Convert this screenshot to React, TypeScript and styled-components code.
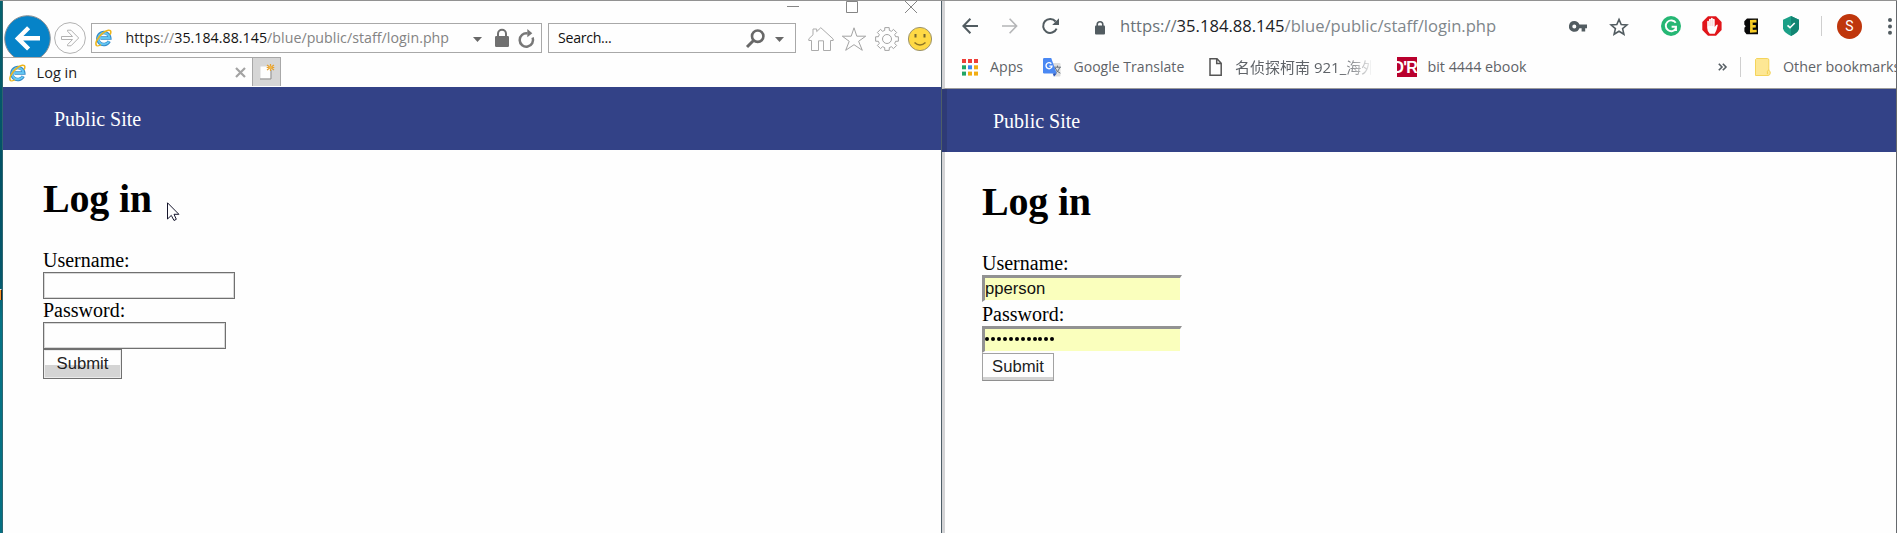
import React from "react";
import styled, { createGlobalStyle, css } from "styled-components";

const GlobalStyle = createGlobalStyle`
  *, *::before, *::after { box-sizing: border-box; }
  body { margin: 0; background: #fefefe; overflow: hidden; }
  svg { display: block; flex: none; overflow: visible; }
`;

const uiFont = `"Open Sans", "Noto Sans CJK SC", sans-serif`;
const serifFont = `"Liberation Serif", serif`;
const controlFont = `"Liberation Sans", sans-serif`;

const Desktop = styled.div`
  display: flex;
  width: 1897px;
  height: 533px;
  border-top: 1px solid #929292;
  background: #fefefe;
  overflow: hidden;
`;

const DesktopEdge = styled.div`
  flex: none;
  width: 3px;
  padding-top: 288px;
  background: linear-gradient(90deg, transparent 2px, #2d6570 2px),
    linear-gradient(#05636f, #035266 30%, #04586c 52%, #067486 60%, #047083);
`;

const EdgeMark = styled.div`
  width: 2px;
  height: 11px;
  background: #f79226;
  border-right: 1px solid #222;
  border-top: 1px solid #eee;
`;

const LeftWindow = styled.section`
  position: relative;
  flex: none;
  width: 939px;
  border-right: 1px solid #4e5e68;
`;

const RightWindow = styled.section`
  flex: none;
  width: 955px;
  border-right: 1px solid #66696d;
  display: flex;
  flex-direction: column;
  overflow: hidden;
`;

const WindowControls = styled.div`
  display: flex;
  justify-content: flex-end;
  gap: 47px;
  height: 12px;
  padding-right: 24px;
`;

const IeToolbar = styled.div`
  display: flex;
  align-items: flex-start;
  height: 44px;
  overflow: hidden;
`;

const Slot = styled.div<{ $gap?: number; $top?: number }>`
  flex: none;
  margin-left: ${(p) => p.$gap ?? 0}px;
  margin-top: ${(p) => p.$top ?? 0}px;
`;

const Field = styled.div<{ $width: number; $gap: number }>`
  display: flex;
  align-items: center;
  flex: none;
  width: ${(p) => p.$width}px;
  height: 30px;
  margin: 10px 0 0 ${(p) => p.$gap}px;
  border: 1px solid #a8a8a8;
`;

const Label = styled.span<{ $width: number; $gap: number; $size?: number; $spacing?: number; $color?: string; $fade?: boolean }>`
  flex: none;
  width: ${(p) => p.$width}px;
  margin-left: ${(p) => p.$gap}px;
  font: ${(p) => p.$size ?? 14.2}px/20px ${uiFont};
  letter-spacing: ${(p) => p.$spacing ?? 0}px;
  color: ${(p) => p.$color ?? "#5f6368"};
  white-space: nowrap;
  ${(p) =>
    p.$fade &&
    css`
      overflow: hidden;
      mask-image: linear-gradient(90deg, #000 108px, transparent 140px);
    `}
`;

const Part = styled.span<{ $color: string }>`
  color: ${(p) => p.$color};
`;

const TabRow = styled.div`
  display: flex;
  height: 30px;
`;

const Tab = styled.div`
  display: flex;
  align-items: center;
  width: 249px;
  height: 30px;
  border-top: 1px solid #a8a8a8;
`;

const NewTab = styled.div`
  width: 29px;
  height: 29px;
  background: #d6d6d6;
  border: 1px solid #a8a8a8;
  border-bottom: 0;
  padding: 7px 0 0 6px;
`;

const SiteNav = styled.nav<{ $right?: boolean }>`
  flex: none;
  height: 63px;
  padding-left: ${(p) => (p.$right ? 46 : 51)}px;
  border-left: ${(p) => (p.$right ? "5px solid #2e3a76" : "0")};
  background: #334287;
  color: #fff;
  font: 20px/65px ${serifFont};
`;

const LoginPage = styled.main<{ $right?: boolean }>`
  flex: 1;
  display: flex;
  flex-direction: column;
  align-items: flex-start;
  padding-left: ${(p) => (p.$right ? 37 : 40)}px;
  border-left: ${(p) => (p.$right ? "3px solid #d3d3d5" : "0")};
  color: #000;
  font: 20px/23px ${serifFont};
`;

const Heading = styled.h1<{ $right?: boolean }>`
  margin: ${(p) => (p.$right ? "27px 0 26px" : "26px 0 27px")};
  font: bold 40px/46px ${serifFont};
  letter-spacing: -0.2px;
`;

const FieldLabel = styled.label<{ $right?: boolean }>`
  height: ${(p) => (p.$right ? 24 : 23)}px;
  line-height: ${(p) => (p.$right ? 25 : 23)}px;
`;

const PlainInput = styled.input<{ $width: number }>`
  width: ${(p) => p.$width}px;
  height: 27px;
  margin: 0;
  padding: 0 3px;
  border: 1px solid #707070;
  border-radius: 0;
  background: #fefefe;
  box-shadow: inset 0 0 0 1px #d8d8d8;
  outline: 0;
  font: 16.67px ${controlFont};
`;

const FilledInput = styled.div`
  width: 200px;
  height: 27px;
  border-style: solid;
  border-width: 3px 2px 2px 3px;
  border-color: #929292 #fefefe #fefefe #929292;
  background: #faffbd;
  background-clip: padding-box;
  color: #111;
  font: 16.67px/21px ${controlFont};
`;

const PasswordDots = styled.div`
  display: flex;
  align-items: center;
  gap: 1.9px;
  height: 19px;
  padding-left: 0.4px;
`;

const Dot = styled.i`
  width: 4px;
  height: 4px;
  border-radius: 50%;
  background: #000;
`;

const SubmitButton = styled.button<{ $right?: boolean }>`
  width: ${(p) => (p.$right ? 72 : 79)}px;
  height: ${(p) => (p.$right ? 28 : 30)}px;
  margin: 0;
  padding: 0 0 ${(p) => (p.$right ? 1 : 0)}px;
  border: 1px solid ${(p) => (p.$right ? "#a2a2a2" : "#707070")};
  border-bottom-color: ${(p) => (p.$right ? "#8f8f8f" : "#707070")};
  border-radius: 0;
  color: #222;
  font: 16.67px/20px ${controlFont};
  background: ${(p) =>
    p.$right ? "linear-gradient(#fefefe 23px, #d3d3d3 23px)" : "linear-gradient(#fefefe 15px, #d4d4d4 15px)"};
  box-shadow: ${(p) => (p.$right ? "none" : "inset 0 0 0 1px #ececec")};
`;

const Pointer = styled.svg`
  position: absolute;
  left: 164px;
  top: 201px;
`;

const ChromeTop = styled.header`
  flex: none;
  height: 88px;
  border-left: 3px solid #d3d3d5;
  border-bottom: 1px solid #9c9c9c;
`;

const ChromeRow = styled.div`
  display: flex;
  align-items: center;
  height: 50px;
  overflow: hidden;
`;

const BookmarkRow = styled(ChromeRow)`
  height: 32px;
`;

const Divider = styled.div<{ $gap: number }>`
  flex: none;
  width: 1px;
  height: 20px;
  margin-left: ${(p) => p.$gap}px;
  background: #cfcfcf;
`;

const Avatar = styled.div`
  flex: none;
  width: 25px;
  height: 25px;
  margin-left: 15px;
  border-radius: 50%;
  background: #bf360c;
  color: #fff;
  text-align: center;
  font: 14px/25px Roboto, sans-serif;
`;

const ReaderBadge = styled.div`
  flex: none;
  display: flex;
  justify-content: flex-end;
  width: 20px;
  height: 20px;
  margin-left: 26px;
  overflow: hidden;
  background: #b9002d;
  color: #fff;
  font: bold 16px/21px ${controlFont};
  letter-spacing: -0.8px;
`;

const IeLogo = () => (
  <svg width="17" height="18" viewBox="0 0 17 18" fill="none">
    <path d="M14.2 12.2A6 6 0 1 1 14.8 9H5.4" stroke="#3289c7" strokeWidth="3.4" />
    <path d="M13.8 12.4A5.7 5.7 0 1 1 14.5 9H5.4" stroke="#62c5f2" strokeWidth="2" />
    <path d="M2.2 16.8C-1.2 15.4 2.5 8.4 7.4 4.3C11.5 1 16.3-.1 15.8 3.5C15.7 4.3 15.4 5 15 5.7" stroke="#edb51c" strokeWidth="1.6" />
    <path d="M2.2 16.8c1.2.3 2.6-.2 4-1" stroke="#edb51c" strokeWidth="1.2" />
  </svg>
);

const Caret = () => (
  <svg width="9" height="5" viewBox="0 0 9 5"><path d="M0 0h9L4.5 5Z" fill="#686868" /></svg>
);

const spokes = [0, 45, 90, 135, 180, 225, 270, 315];
const gearPath = spokes
  .map((a, i) => {
    const at = (r: number, d: number) => {
      const t = ((a + d - 90) * Math.PI) / 180;
      return `${(12 + r * Math.cos(t)).toFixed(2)} ${(12 + r * Math.sin(t)).toFixed(2)}`;
    };
    return `${i ? "L" : "M"}${at(8.9, -15)}L${at(11.6, -11)}L${at(11.6, 11)}L${at(8.9, 15)}`;
  })
  .join("") + "Z";

function Url({ dim, scheme, host, colon }: { dim: string; scheme: string; host: string; colon: string }) {
  return (
    <>
      <Part $color={scheme}>https</Part>
      <Part $color={colon}>://</Part>
      <Part $color={host}>35.184.88.145</Part>
      <Part $color={dim}>/blue/public/staff/login.php</Part>
    </>
  );
}

function ExplorerWindow() {
  return (
    <LeftWindow>
      <WindowControls>
        <svg width="12" height="12"><path d="M0 5.5h12" stroke="#858585" /></svg>
        <svg width="12" height="12"><path d="M.5 .5h11v11H.5Z" fill="none" stroke="#858585" /></svg>
        <svg width="12" height="12"><path d="M0 0l12 12M12 0L0 12" stroke="#858585" /></svg>
      </WindowControls>
      <IeToolbar>
        <Slot $gap={1} $top={2}>
          <svg width="47" height="47" viewBox="0 0 47 47" fill="none">
            <circle cx="23.5" cy="23.5" r="22.8" fill="#0683c8" stroke="#8a8f93" />
            <path d="M36 23.3H14M24.6 12.8L13.9 23.4L24.6 34" stroke="#fefefe" strokeWidth="4.4" />
          </svg>
        </Slot>
        <Slot $gap={3} $top={9}>
          <svg width="32" height="32" viewBox="0 0 32 32" fill="none" stroke="#b2b2b2">
            <circle cx="16" cy="16" r="15.4" />
            <path d="M7.5 14.5H18.5L13.5 9.2V8.2H17L24.7 16L17 23.8H13.5V22.7L18.5 17.5H7.5Z" />
          </svg>
        </Slot>
        <Field $width={451} $gap={5}>
          <Slot $gap={3}><IeLogo /></Slot>
          <Label $width={328} $gap={13.5} $size={14.2} $spacing={0.04}>
            <Url scheme="#222" colon="#888" host="#111" dim="#838383" />
          </Label>
          <Slot $gap={19.5} $top={2}><Caret /></Slot>
          <Slot $gap={12.5}>
            <svg width="14" height="18" viewBox="0 0 14 18">
              <path d="M3 8V4.8a4 4 0 0 1 8 0V8" fill="none" stroke="#707070" strokeWidth="2" />
              <rect y="7" width="14" height="11" rx="1.2" fill="#707070" />
            </svg>
          </Slot>
          <Slot $gap={9}>
            <svg width="17" height="19" viewBox="0 0 17 19" fill="none">
              <path d="M14.6 8.5A6.7 6.7 0 1 1 9.5 4.4" stroke="#777" strokeWidth="2.5" />
              <path d="M9.3 0L14.3 4.3L9.3 8.3Z" fill="#777" />
            </svg>
          </Slot>
        </Field>
        <Field $width={248} $gap={6}>
          <Label $width={60} $gap={9} $size={14.2} $spacing={-0.3} $color="#111">Search...</Label>
          <Slot $gap={128}>
            <svg width="19" height="19" viewBox="0 0 19 19" fill="none" stroke="#686868">
              <circle cx="11.7" cy="7.2" r="5.7" strokeWidth="2.6" />
              <path d="M7.5 11.5L1 18" strokeWidth="3" />
            </svg>
          </Slot>
          <Slot $gap={9.5} $top={2}><Caret /></Slot>
        </Field>
        <Slot $gap={12} $top={14}>
          <svg width="26" height="24" viewBox="0 0 26 24" fill="none" stroke="#ababab">
            <path d="M3.5 13.5H.8V11.8L5 7.8V2H8.7V4.6L12.8.7L25.2 12V13.5H22.5V23.5H15.5V13.8H10.5V23.5H3.5Z" />
          </svg>
        </Slot>
        <Slot $gap={8} $top={14}>
          <svg width="24" height="24" viewBox="0 0 24 24" fill="none" stroke="#a3a3a3">
            <path d="M12 .8L14.8 9.2H23.7L16.6 14.3L20.3 23.3L12 17.7L3.7 23.3L7.2 14.3L.3 9.2H9.2Z" />
          </svg>
        </Slot>
        <Slot $gap={9} $top={14}>
          <svg width="24" height="24" viewBox="0 0 24 24" fill="none" stroke="#a3a3a3">
            <path d={gearPath} />
            <circle cx="12" cy="12" r="4.5" />
          </svg>
        </Slot>
        <Slot $gap={9} $top={14}>
          <svg width="24" height="24" viewBox="0 0 24 24" fill="none">
            <circle cx="12" cy="12" r="11.6" fill="#fed945" stroke="#9b9370" />
            <path d="M7.5 7v3.5M16.5 7v3.5" stroke="#75672d" strokeWidth="2" />
            <path d="M6.5 15.5Q12 20.5 17.5 15.5" stroke="#8d7626" strokeWidth="1.6" />
          </svg>
        </Slot>
      </IeToolbar>
      <TabRow>
        <Tab>
          <Slot $gap={6}><IeLogo /></Slot>
          <Label $width={50} $gap={10.6} $size={14.5} $color="#222">Log in</Label>
          <Slot $gap={148}>
            <svg width="11" height="11"><path d="M1 1l9 9M10 1l-9 9" stroke="#a3a3a3" strokeWidth="2.2" /></svg>
          </Slot>
        </Tab>
        <NewTab>
          <svg width="16" height="16" viewBox="0 0 16 16">
            <path d="M1.5 1.5h10v12h-10Z" fill="#fefefe" />
            <path d="M1 14h11V5" fill="none" stroke="#8e8e8e" />
            <path d="M11.5-1v7M8-.0l7 5M15 0l-7 5M7.7 2.5h7.6" stroke="#e6a02b" strokeWidth="1.2" />
            <circle cx="11.5" cy="2.5" r="1.7" fill="#f1b549" />
          </svg>
        </NewTab>
      </TabRow>
      <SiteNav>Public Site</SiteNav>
      <LoginPage>
        <Heading>Log in</Heading>
        <FieldLabel>Username:</FieldLabel>
        <PlainInput $width={192} aria-label="Username" />
        <FieldLabel>Password:</FieldLabel>
        <PlainInput $width={183} type="password" aria-label="Password" />
        <SubmitButton>Submit</SubmitButton>
      </LoginPage>
      <Pointer width="12" height="19" viewBox="0 0 12 19">
        <path d="M.5 .8V17L4.3 13.4L7 18.5L9.3 17.3L7 12.3H11.9Z" fill="#fefefe" stroke="#15152c" />
      </Pointer>
    </LeftWindow>
  );
}

const gridColors = ["#ee3f39", "#ee3f39", "#ee3f39", "#21a565", "#3d87ee", "#f2ad12", "#21a565", "#f2ad12", "#f2ad12"];

function ChromeWindow() {
  return (
    <RightWindow>
      <ChromeTop>
        <ChromeRow>
          <Slot $gap={17}>
            <svg width="16" height="16" viewBox="0 0 16 16" fill="none" stroke="#525c61" strokeWidth="2">
              <path d="M16 8H1.4M8.4 .8L1.4 8L8.4 15.2" />
            </svg>
          </Slot>
          <Slot $gap={24}>
            <svg width="16" height="16" viewBox="0 0 16 16" fill="none" stroke="#b4b5b7" strokeWidth="1.6">
              <path d="M0 8H14.6M7.6 .8L14.6 8L7.6 15.2" />
            </svg>
          </Slot>
          <Slot $gap={23.5}>
            <svg width="17" height="16" viewBox="0 0 17 16" fill="none">
              <path d="M14.6 10.6A7 7 0 1 1 13.6 3.5" stroke="#525c61" strokeWidth="2" />
              <path d="M17 .2V7H10.2Z" fill="#525c61" />
            </svg>
          </Slot>
          <Slot $gap={36.5} $top={3}>
            <svg width="10" height="14" viewBox="0 0 10 14">
              <path d="M2.2 6V3.6a2.8 2.8 0 0 1 5.6 0V6" fill="none" stroke="#525c61" strokeWidth="1.6" />
              <rect y="4.5" width="10" height="9" rx="1" fill="#525c61" />
            </svg>
          </Slot>
          <Label $width={449} $gap={15} $size={16.6}>
            <Url scheme="#6a7277" colon="#6a7277" host="#202124" dim="#7f868b" />
          </Label>
          <Slot>
            <svg width="18" height="11" viewBox="0 0 18 11">
              <path fillRule="evenodd" d="M5.3 0a5.4 5.4 0 0 1 5.1 3.6H18V7.3H16.2V10.5H12.6V7.3H10.4A5.4 5.4 0 1 1 5.3 0ZM5.3 3.4a2 2 0 1 0 0 4a2 2 0 1 0 0-4Z" fill="#525c61" />
            </svg>
          </Slot>
          <Slot $gap={22.5} $top={2}>
            <svg width="18" height="18" viewBox="0 0 18 18" fill="none" stroke="#525c61" strokeWidth="1.6">
              <path d="M9 1.4L11.2 6.5L16.9 7L12.6 10.6L13.9 16.2L9 13.2L4.1 16.2L5.4 10.6L1.1 7L6.8 6.5Z" />
            </svg>
          </Slot>
          <Slot $gap={33.5}>
            <svg width="20" height="20" viewBox="0 0 20 20" fill="none">
              <circle cx="10" cy="10" r="10" fill="#25b774" />
              <path d="M14.7 6.8A5.4 5.4 0 1 0 15 12.3M10.6 10.8H15V15" stroke="#fefefe" strokeWidth="1.9" />
            </svg>
          </Slot>
          <Slot $gap={20.5}>
            <svg width="20" height="20" viewBox="0 0 20 20">
              <path d="M6 .3H14L19.6 6V14L14 19.7H6L.3 14V6Z" fill="#e1151a" />
              <path d="M5.2 12V5.6a.9.9 0 0 1 1.8 0V3.7a.9.9 0 0 1 1.9 0V2.8a.9.9 0 0 1 1.9 0V3.7a.9.9 0 0 1 1.9 0V11L14 9.2Q15.4 8 15.8 9Q14.7 15 12.7 17.7H7.7Q5.2 15.5 5.2 12Z" fill="#fefefe" />
              <path d="M7 5v5M8.9 4v6M10.8 4v6" stroke="#f0a0a0" strokeWidth=".5" />
            </svg>
          </Slot>
          <Slot $gap={22}>
            <svg width="15" height="17" viewBox="0 0 15 17">
              <path d="M3 .5H14V16.2H2.5L.4 13.5V9.8L1.7 8.3L.3 6.5V3.3Z" fill="#080808" />
              <path d="M7.4 3.4V13.6M6 3.4L12.5 3.1M7 8.4L11.8 8.2M6 13.4L12.7 13" fill="none" stroke="#f7cc26" strokeWidth="2.6" />
            </svg>
          </Slot>
          <Slot $gap={24.5}>
            <svg width="16" height="20" viewBox="0 0 16 20">
              <path d="M8 0L16 3.8V12.5Q15 16.8 8 20Q1 16.8 0 12.5V3.8Z" fill="#1ba087" />
              <path d="M8 0L16 3.8V12.5Q15 16.8 8 20Z" fill="#128573" />
              <path d="M4.5 9.3L7 11.7L11.7 7" fill="none" stroke="#fefefe" strokeWidth="1.6" />
            </svg>
          </Slot>
          <Divider $gap={22} />
          <Avatar>S</Avatar>
          <Slot $gap={26}>
            <svg width="4" height="17" viewBox="0 0 4 17" fill="#525c61">
              <circle cx="2" cy="2" r="2" /><circle cx="2" cy="8.4" r="2" /><circle cx="2" cy="14.8" r="2" />
            </svg>
          </Slot>
        </ChromeRow>
        <BookmarkRow>
          <Slot $gap={17}>
            <svg width="16" height="17" viewBox="0 0 16 17">
              {gridColors.map((color, i) => (
                <rect key={i} x={(i % 3) * 6} y={Math.floor(i / 3) * 6.3} width="4" height="4" fill={color} />
              ))}
            </svg>
          </Slot>
          <Label $width={45} $gap={12}>Apps</Label>
          <Slot $gap={8}>
            <svg width="19" height="19" viewBox="0 0 19 19" fill="none">
              <path d="M8 5h8.5q1 0 1 1v11.5q0 1-1 1H12Z" fill="#dedede" />
              <path d="M11 9.2h7M14.5 7.6v1.6M16.8 9.5Q15.5 14 11.5 15.5M12.2 10q1.5 4 5.2 5.2" stroke="#68727b" />
              <path d="M1.2 0H8.2L13.7 15.4H1.2Q0 15.4 0 14.2V1.2Q0 0 1.2 0Z" fill="#4a88f3" />
              <path d="M9.7 15.4H13.7L11 18.8Z" fill="#2b54b5" />
              <path d="M8.3 5.7A3 3 0 1 0 9 8.1H6.3" stroke="#fefefe" strokeWidth="1.4" />
            </svg>
          </Slot>
          <Label $width={120} $gap={11.5} $size={14} $spacing={0.03}>Google Translate</Label>
          <Slot $gap={15.5}>
            <svg width="13" height="18" viewBox="0 0 13 18" fill="none" stroke="#555" strokeWidth="1.5">
              <path d="M1 .8H8L12.2 5.3V17.2H1ZM7.7 .8V5.6H12.2" />
            </svg>
          </Slot>
          <Label $width={136} $gap={13} $size={15} $fade>名侦探柯南 921_海外</Label>
          <ReaderBadge>O'R</ReaderBadge>
          <Label $width={270} $gap={10.5} $size={14.3}>bit 4444 ebook</Label>
          <Slot $gap={20}>
            <svg width="9" height="8" viewBox="0 0 9 8" fill="none" stroke="#555d63" strokeWidth="1.6">
              <path d="M.8 .7L4 4L.8 7.3M4.8 .7L8 4L4.8 7.3" />
            </svg>
          </Slot>
          <Divider $gap={13} />
          <Slot $gap={14.5}>
            <svg width="16" height="18" viewBox="0 0 16 18">
              <path d="M1.5 .5H12.5Q13.8 .5 13.8 2V12.3Q15.5 13 15.3 15Q15 17.5 13 17.5H.5V1.5Z" fill="#fde794" stroke="#f4d45c" />
              <path d="M13.7 11.7q-2 1.3-1.3 4.5" fill="none" stroke="#f1cf4d" />
            </svg>
          </Slot>
          <Label $width={125} $gap={12} $size={14.3}>Other bookmarks</Label>
        </BookmarkRow>
      </ChromeTop>
      <SiteNav $right>Public Site</SiteNav>
      <LoginPage $right>
        <Heading $right>Log in</Heading>
        <FieldLabel $right>Username:</FieldLabel>
        <FilledInput>pperson</FilledInput>
        <FieldLabel $right>Password:</FieldLabel>
        <FilledInput>
          <PasswordDots>
            {Array.from({ length: 12 }, (_, i) => <Dot key={i} />)}
          </PasswordDots>
        </FilledInput>
        <SubmitButton $right>Submit</SubmitButton>
      </LoginPage>
    </RightWindow>
  );
}

export default function App() {
  return (
    <>
      <GlobalStyle />
      <Desktop>
        <DesktopEdge><EdgeMark /></DesktopEdge>
        <ExplorerWindow />
        <ChromeWindow />
      </Desktop>
    </>
  );
}
